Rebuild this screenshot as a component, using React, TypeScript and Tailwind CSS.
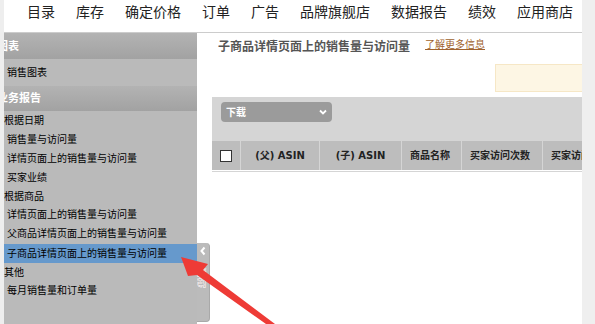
import React from 'react';

export default function App() {
  const nav = ["目录", "库存", "确定价格", "订单", "广告", "品牌旗舰店", "数据报告", "绩效", "应用商店"];
  const cols = [
    { label: "(父) ASIN", w: "w-[78px]" },
    { label: "(子) ASIN", w: "w-[81px]" },
    { label: "商品名称", w: "w-[59px]" },
    { label: "买家访问次数", w: "w-[80px]" },
    { label: "买家访问次数", w: "w-[80px]" },
  ];

  return (
    <div
      className="relative flex w-[595px] h-[324px] overflow-hidden bg-white"
      style={{ fontFamily: '"Liberation Sans", "Noto Sans CJK SC", sans-serif' }}
    >
      <div className="w-[4px] shrink-0 bg-[#eeeeee]" />

      <div className="flex flex-col w-[578px] shrink-0">
        {/* top nav */}
        <div className="h-[33px] shrink-0 flex items-center gap-[21px] pl-[23px] pb-[7px] border-b border-[#cccccc] text-[14px] text-[#222] whitespace-nowrap">
          {nav.map(n => <span key={n}>{n}</span>)}
        </div>

        <div className="flex flex-1">
          {/* sidebar */}
          <div className="w-[193px] shrink-0 bg-[#bababa] overflow-hidden text-[10px] text-black whitespace-nowrap">
            <div className="h-[26px] flex items-center -ml-[7px] bg-gradient-to-b from-[#b3b3b3] to-[#a2a2a2] text-white font-bold text-[11px]">图表</div>
            <div className="h-[27px] flex items-center pl-[3px]">销售图表</div>
            <div className="h-[25px] flex items-center -ml-[7px] bg-gradient-to-b from-[#b3b3b3] to-[#a2a2a2] text-white font-bold text-[11px]">业务报告</div>
            <div className="h-[17px] flex items-end">根据日期</div>
            <div className="h-[20px] flex items-center pl-[3px] pt-[2px]">销售量与访问量</div>
            <div className="h-[20px] flex items-center pl-[3px]">详情页面上的销售量与访问量</div>
            <div className="h-[19px] flex items-center pl-[3px]">买家业绩</div>
            <div className="h-[19px] flex items-center">根据商品</div>
            <div className="h-[17px] flex items-center pl-[3px]">详情页面上的销售量与访问量</div>
            <div className="h-[21px] flex items-center pl-[3px]">父商品详情页面上的销售量与访问量</div>
            <div className="h-[19px] flex items-center pl-[3px] bg-[#6699cc]">子商品详情页面上的销售量与访问量</div>
            <div className="h-[18px] flex items-center">其他</div>
            <div className="h-[18px] flex items-center pl-[3px]">每月销售量和订单量</div>
          </div>

          {/* collapse tab column */}
          <div className="w-[15px] shrink-0 pt-[210px]">
            <div className="w-[13px] h-[79px] bg-[#bbbbbb] rounded-r-[4px] border-r border-b border-[#a9a9a9] flex flex-col items-center pt-[3px]">
              <svg width="8" height="10" viewBox="0 0 8 10">
                <path d="M5.5 1.5 L2.5 5 L5.5 8.5" stroke="white" strokeWidth="2" fill="none" />
              </svg>
              <span className="mt-[12px] text-[10px] leading-[10px] text-[#f6eded] [writing-mode:vertical-rl] rotate-180">隐藏</span>
            </div>
          </div>

          {/* main */}
          <div className="w-[370px] shrink-0 flex flex-col">
            <div className="h-[25px] flex items-center pl-[6px] pt-[2px]">
              <span className="text-[12px] font-bold text-[#555]">子商品详情页面上的销售量与访问量</span>
              <span className="ml-[15px] -mt-[4px] text-[10px] text-[#a0622d] underline">了解更多信息</span>
            </div>
            <div className="flex justify-end mt-[6px]">
              <div className="w-[87px] h-[28px] bg-[#fdf6e4] border border-r-0 border-[#f6e7c6]" />
            </div>
            <div className="mt-[5px] h-[75px] bg-[#d5d5d5] flex flex-col">
              <div className="ml-[9px] mt-[5px] w-[111px] h-[20px] rounded-[4px] bg-[#9b9b9b] flex items-center justify-between px-[5px] text-white text-[10px] font-bold">
                <span>下载</span>
                <svg width="8" height="6" viewBox="0 0 8 6">
                  <path d="M1 1.5 L4 4.5 L7 1.5" stroke="white" strokeWidth="1.8" fill="none" />
                </svg>
              </div>
              <div
                className="mt-[19px] h-[30px] flex gap-[1px] border-b border-white overflow-hidden whitespace-nowrap text-[10px] font-bold text-[#222]"
                style={{ fontFamily: '"DejaVu Sans", "Noto Sans CJK SC", sans-serif' }}
              >
                <div className="w-[28px] shrink-0 bg-[#bdbdbd] flex items-center justify-center">
                  <div className="w-[12px] h-[12px] bg-white border border-[#333]" />
                </div>
                {cols.map((c, i) => (
                  <div key={i} className={`${c.w} shrink-0 bg-[#bdbdbd] flex items-center ${i < 2 ? "justify-center" : "pl-[8px]"}`}>
                    {c.label}
                  </div>
                ))}
              </div>
            </div>
          </div>
        </div>
      </div>

      <div className="w-[13px] shrink-0 bg-[#efefef]" />

      {/* annotation arrow */}
      <svg className="absolute left-0 top-0 pointer-events-none" width="595" height="324">
        <polygon points="181,257 208,264 203,270 275,324 266,324 197,275 188,276" fill="#ee3b36" />
      </svg>
    </div>
  );
}
